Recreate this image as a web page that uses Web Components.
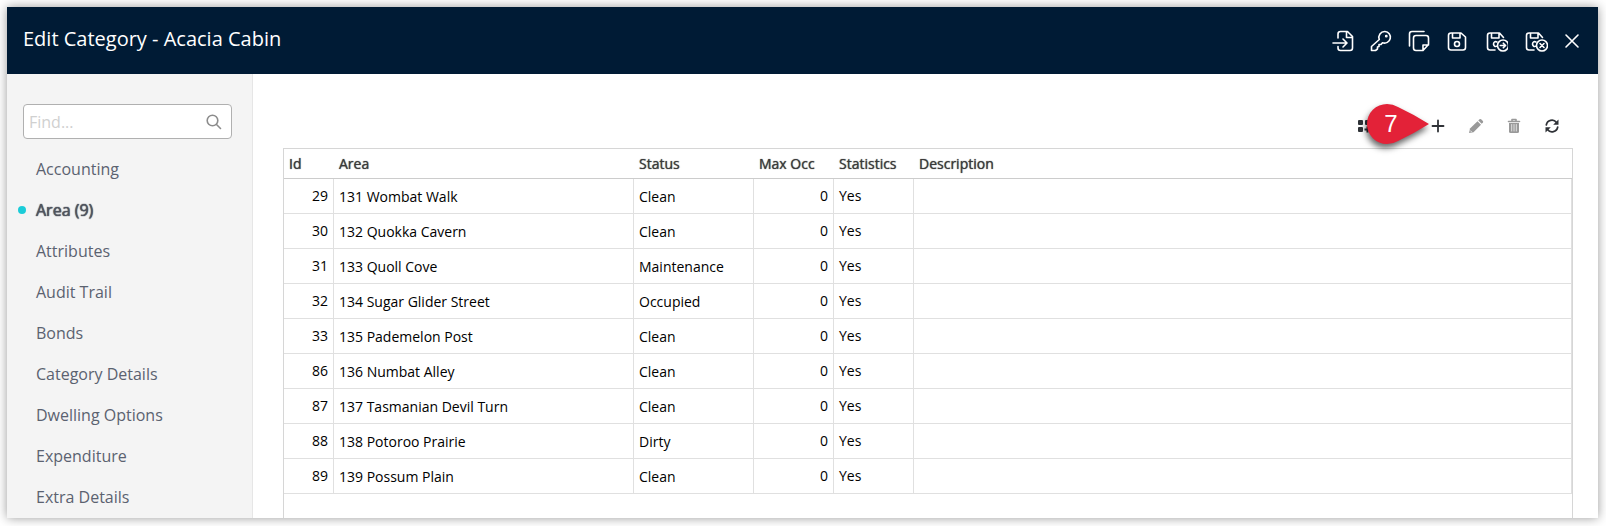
<!DOCTYPE html>
<html lang="en">
<head>
<meta charset="utf-8">
<meta name="viewport" content="width=device-width, initial-scale=1">
<title>Edit Category - Acacia Cabin</title>
<style>
  body {
    margin: 0;
    padding: 7px 8px 8px 7px;
    min-height: 100vh;
    box-sizing: border-box;
    display: flex;
    background: #fff;
    font-family: "Open Sans", "Noto Sans", sans-serif;
    color: #000;
  }
</style>
</head>
<body>
<edit-dialog heading="Edit Category - Acacia Cabin">
  <icon-button slot="actions" icon="import" label="Open in page"></icon-button>
  <icon-button slot="actions" icon="key" label="Security"></icon-button>
  <icon-button slot="actions" icon="copy" label="Copy"></icon-button>
  <icon-button slot="actions" icon="save" label="Save"></icon-button>
  <icon-button slot="actions" icon="saveNext" label="Save and continue"></icon-button>
  <icon-button slot="actions" icon="saveClose" label="Save and close"></icon-button>
  <icon-button slot="actions" icon="close" label="Close"></icon-button>
  <side-menu slot="menu" current="Area (9)"></side-menu>
  <grid-toolbar></grid-toolbar>
  <area-table></area-table>
</edit-dialog>

<script>
const ICONS = {
  import: {
    size: [22, 22],
    art: `<path d="M6 8V4Q6 1.500 8.500 1.500H15.500L20.500 6.500V18Q20.500 20.500 18 20.500H8.500Q6 20.500 6 18V16.500M14.500 1.500V7.500H20.500M1 13H14.500M11 9L15 13L11 17"/>`
  },
  key: {
    size: [22, 22],
    art: `<path d="M15 1.500A5.800 5.800 0 1 1 12.500 12.700L11 14.500H9V16.500L7.500 17V19L5.500 20.500H1.500V16.500L9.300 9.500A5.800 5.800 0 0 1 15 1.500Z"/><circle cx="16.300" cy="6.200" r=".6" fill="currentColor"/>`
  },
  copy: {
    size: [22, 22],
    art: `<path d="M1.500 16V4Q1.500 1.500 4 1.500H16M5.500 8Q5.500 5.500 8 5.500H18Q20.500 5.500 20.500 8V14.500L15 20.500H8Q5.500 20.500 5.500 18ZM15 20V15H20.500"/>`
  },
  save: {
    size: [22, 22],
    art: `<path d="M2.500 5.500Q2.500 3 5 3H15L19.500 7V17.500Q19.500 20 17 20H5Q2.500 20 2.500 17.500ZM6.500 3V8H14V3"/><circle cx="11" cy="14" r="2.500"/>`
  },
  saveNext: {
    size: [24, 22],
    art: `<path d="M11 20H6Q3.500 20 3.500 17.500V5.500Q3.500 3 6 3H15.500L19.500 7.500M7.500 3V8H15V3M13 12Q10 10.700 9.500 14Q10 17 12.500 16.300"/><circle cx="19" cy="15.500" r="5.500"/><path d="M16.300 15.500H21.500M19.300 13.200L21.600 15.500L19.300 17.800"/>`
  },
  saveClose: {
    size: [24, 22],
    art: `<path d="M10 20H5Q2.500 20 2.500 17.500V5.500Q2.500 3 5 3H14.500L18.500 7.500M6.500 3V8H14V3M12 12Q9 10.700 8.500 14Q9 17 11.500 16.300"/><circle cx="18" cy="15.500" r="5.500"/><path d="M16 13.500L20 17.500M20 13.500L16 17.500"/>`
  },
  close: {
    size: [16, 22],
    art: `<path d="M2 5L14 17M14 5L2 17"/>`
  },
  search: {
    size: [16, 16],
    art: `<circle cx="6.500" cy="6.500" r="5.300"/><path d="M10.500 10.500L14.500 14.500"/>`
  },
  grid: {
    size: [16, 16],
    art: `<g fill="currentColor" stroke="none"><rect x="2" y="2" width="5" height="5" rx="1"/><rect x="2" y="9" width="5" height="5" rx="1"/><rect x="9" y="2" width="5" height="5" rx="1"/><path d="M10.500 8.500h2v2h2v2h-2v2h-2v-2h-2v-2h2z"/></g>`
  },
  plus: {
    size: [16, 16],
    art: `<path d="M8 2.500V13.500M2.500 8H13.500" stroke-width="1.800"/>`
  },
  pencil: {
    size: [16, 16],
    art: `<g fill="currentColor" stroke="none"><path d="M1 15L2 10.500L9.500 3.200L13 6.700L5.500 14.200Z"/><path d="M10.300 2.400L11.500 1.200Q12.300.6 13.100 1.200L14.900 3Q15.500 3.800 14.900 4.600L13.700 5.800Z"/></g><path d="M2.500 12.800L3.400 13.700" stroke="#fff" stroke-width=".8"/>`
  },
  trash: {
    size: [16, 16],
    art: `<path d="M2.500 3.500H13.500M6 3V1.500H10V3" stroke-width="1.600"/><path d="M3 5H13V13.500Q13 15 11.500 15H4.500Q3 15 3 13.500Z" fill="currentColor" stroke="none"/><path d="M5.700 6.500V13M8 6.500V13M10.300 6.500V13" stroke="#fff" stroke-width=".7"/>`
  },
  refresh: {
    size: [16, 16],
    art: `<path d="M2.300 7A5.700 5.700 0 0 1 12.500 4.500M13.700 9A5.700 5.700 0 0 1 3.500 11.500" stroke-width="1.700"/><path d="M14.500 1.500V6.800H9.200ZM1.500 14.500V9.200H6.800Z" fill="currentColor" stroke="none"/>`
  }
};

function drawIcon(name) {
  const { size: [w, h], art } = ICONS[name];
  return `<svg width="${w}" height="${h}" viewBox="0 0 ${w} ${h}" fill="none" stroke="currentColor"
    stroke-width="1.600" stroke-linecap="round" stroke-linejoin="round" aria-hidden="true">${art}</svg>`;
}

class IconButton extends HTMLElement {
  constructor() {
    super();
    this.attachShadow({ mode: "open" });
  }

  connectedCallback() {
    const disabled = this.hasAttribute("disabled") ? "disabled" : "";
    this.shadowRoot.innerHTML = `
      <style>
        :host {
          display: inline-flex;
        }
        button {
          display: flex;
          padding: 0;
          border: 0;
          background: none;
          color: inherit;
          cursor: pointer;
        }
        button:disabled {
          color: #999;
          cursor: default;
        }
      </style>
      <button type="button" aria-label="${this.getAttribute("label")}" ${disabled}>${drawIcon(this.getAttribute("icon"))}</button>
    `;
  }
}

class EditDialog extends HTMLElement {
  constructor() {
    super();
    this.attachShadow({ mode: "open" });
  }

  connectedCallback() {
    this.shadowRoot.innerHTML = `
      <style>
        :host {
          display: flex;
          flex-direction: column;
          flex: 1;
          min-width: 0;
          background: #fff;
          box-shadow: 0 0 10px rgba(0, 0, 0, 0.4);
        }
        header {
          display: flex;
          justify-content: space-between;
          align-items: center;
          box-sizing: border-box;
          height: 67px;
          padding: 0 18px 4px 16px;
          background: #001b35;
          color: #fff;
        }
        h1 {
          margin: 0;
          font-size: 20px;
          line-height: 28px;
          font-weight: 400;
        }
        .actions {
          display: flex;
          gap: 16px;
          padding-top: 4px;
        }
        .body {
          display: flex;
          flex: 1;
        }
        main {
          display: flex;
          flex-direction: column;
          flex: 1;
          min-width: 0;
          padding: 40px 25px 0 30px;
        }
      </style>
      <header>
        <h1>${this.getAttribute("heading")}</h1>
        <div class="actions"><slot name="actions"></slot></div>
      </header>
      <div class="body">
        <slot name="menu"></slot>
        <main><slot></slot></main>
      </div>
    `;
  }
}

class SideMenu extends HTMLElement {
  constructor() {
    super();
    this.attachShadow({ mode: "open" });
    this.items = [
      "Accounting", "Area (9)", "Attributes", "Audit Trail", "Bonds",
      "Category Details", "Dwelling Options", "Expenditure", "Extra Details"
    ];
  }

  connectedCallback() {
    const current = this.getAttribute("current");
    const links = this.items.map((item) => `
      <li><a href="#" ${item === current ? 'aria-current="page"' : ""}>${item}</a></li>`).join("");

    this.shadowRoot.innerHTML = `
      <style>
        :host {
          display: block;
          box-sizing: border-box;
          flex: 0 0 246px;
          min-width: 0;
          padding-top: 30px;
          background: #f4f4f4;
          border-right: 1px solid #e6e6e6;
        }
        .search {
          display: flex;
          align-items: center;
          box-sizing: border-box;
          height: 35px;
          margin: 0 20px 9px 16px;
          padding: 0 9px 0 5px;
          background: #fff;
          border: 1px solid #b0b0b0;
          border-radius: 4px;
          color: #8c8c8c;
        }
        input {
          flex: 1;
          min-width: 0;
          padding: 0;
          border: 0;
          outline: 0;
          background: none;
          font: inherit;
          font-size: 16px;
          color: #333;
        }
        input::placeholder {
          color: #d0d0d0;
          opacity: 1;
        }
        ul {
          margin: 0;
          padding: 0;
          list-style: none;
        }
        a {
          display: flex;
          align-items: center;
          height: 41px;
          font-size: 16px;
          color: #5b6270;
          text-decoration: none;
        }
        a::before {
          content: "";
          width: 8px;
          height: 8px;
          margin: 0 10px 0 11px;
          border-radius: 50%;
        }
        a[aria-current] {
          color: #50545e;
          text-shadow: 0 0 1px currentColor, 0 0 1px currentColor;
        }
        a[aria-current]::before {
          background: #1bccd8;
        }
      </style>
      <label class="search">
        <input type="text" placeholder="Find..." aria-label="Find">
        ${drawIcon("search")}
      </label>
      <nav><ul>${links}</ul></nav>
    `;
  }
}

class StepMarker extends HTMLElement {
  constructor() {
    super();
    this.attachShadow({ mode: "open" });
  }

  connectedCallback() {
    this.shadowRoot.innerHTML = `
      <style>
        :host {
          display: grid;
          width: 62px;
          height: 40px;
          font-family: "Liberation Sans", Arial, sans-serif;
          font-size: 24px;
          line-height: 40px;
          color: #fff;
        }
        svg, span {
          grid-area: 1 / 1;
        }
        svg {
          overflow: visible;
          filter: drop-shadow(-1px 4px 3px rgba(0, 0, 0, 0.6));
        }
        span {
          position: relative;
          width: 48px;
          text-align: center;
        }
      </style>
      <svg width="62" height="40" viewBox="0 0 62 40" aria-hidden="true">
        <path d="M62 20Q46 10 31 3Q26 0 20 0A20 20 0 0 0 20 40Q26 40 31 37Q46 30 62 20Z" fill="#e32238"/>
      </svg>
      <span><slot></slot></span>
    `;
  }
}

class GridToolbar extends HTMLElement {
  constructor() {
    super();
    this.attachShadow({ mode: "open" });
  }

  connectedCallback() {
    this.shadowRoot.innerHTML = `
      <style>
        :host {
          display: flex;
          justify-content: flex-end;
          gap: 22px;
          padding: 4px 13px 14px 0;
          color: #2f3237;
        }
        .layout {
          position: relative;
          display: flex;
          margin-right: 36px;
        }
        step-marker {
          position: absolute;
          left: 11px;
          top: -14px;
        }
      </style>
      <div class="layout">
        <icon-button icon="grid" label="Layout"></icon-button>
        <step-marker>7</step-marker>
      </div>
      <icon-button icon="plus" label="Add"></icon-button>
      <icon-button icon="pencil" label="Edit" disabled></icon-button>
      <icon-button icon="trash" label="Delete" disabled></icon-button>
      <icon-button icon="refresh" label="Refresh"></icon-button>
    `;
  }
}

class AreaTable extends HTMLElement {
  constructor() {
    super();
    this.attachShadow({ mode: "open" });
    this.rows = [
      [29, "131 Wombat Walk", "Clean"],
      [30, "132 Quokka Cavern", "Clean"],
      [31, "133 Quoll Cove", "Maintenance"],
      [32, "134 Sugar Glider Street", "Occupied"],
      [33, "135 Pademelon Post", "Clean"],
      [86, "136 Numbat Alley", "Clean"],
      [87, "137 Tasmanian Devil Turn", "Clean"],
      [88, "138 Potoroo Prairie", "Dirty"],
      [89, "139 Possum Plain", "Clean"]
    ];
  }

  connectedCallback() {
    const rows = this.rows.map(([id, area, status]) => `
      <tr><td class="num">${id}</td><td class="text">${area}</td><td class="text">${status}</td><td class="num">0</td><td>Yes</td><td></td></tr>`).join("");

    this.shadowRoot.innerHTML = `
      <style>
        :host {
          display: block;
          flex: 1;
          border: 1px solid #d6d6d6;
          border-bottom: 0;
        }
        table {
          width: 100%;
          table-layout: fixed;
          border-collapse: separate;
          border-spacing: 0;
          font-size: 14px;
          line-height: 20px;
        }
        th, td {
          box-sizing: border-box;
          padding: 0 5px;
          text-align: left;
          white-space: nowrap;
        }
        th {
          height: 30px;
          border-bottom: 1px solid #ccc;
          font-weight: 400;
          color: #3a3a3a;
          text-shadow: 0 0 1px currentColor;
        }
        td {
          height: 35px;
          padding-bottom: 1px;
          border-right: 1px solid #e0e0e0;
          border-bottom: 1px solid #e0e0e0;
        }
        .text {
          padding-top: 1px;
          padding-bottom: 0;
        }
        .num {
          text-align: right;
        }
        .id { width: 50px; }
        .area { width: 300px; }
        .status { width: 120px; }
        .short { width: 80px; }
      </style>
      <table>
        <thead>
          <tr>
            <th class="id">Id</th>
            <th class="area">Area</th>
            <th class="status">Status</th>
            <th class="short">Max Occ</th>
            <th class="short">Statistics</th>
            <th>Description</th>
          </tr>
        </thead>
        <tbody>${rows}</tbody>
      </table>
    `;
  }
}

customElements.define("icon-button", IconButton);
customElements.define("side-menu", SideMenu);
customElements.define("step-marker", StepMarker);
customElements.define("grid-toolbar", GridToolbar);
customElements.define("area-table", AreaTable);
customElements.define("edit-dialog", EditDialog);
</script>
</body>
</html>
